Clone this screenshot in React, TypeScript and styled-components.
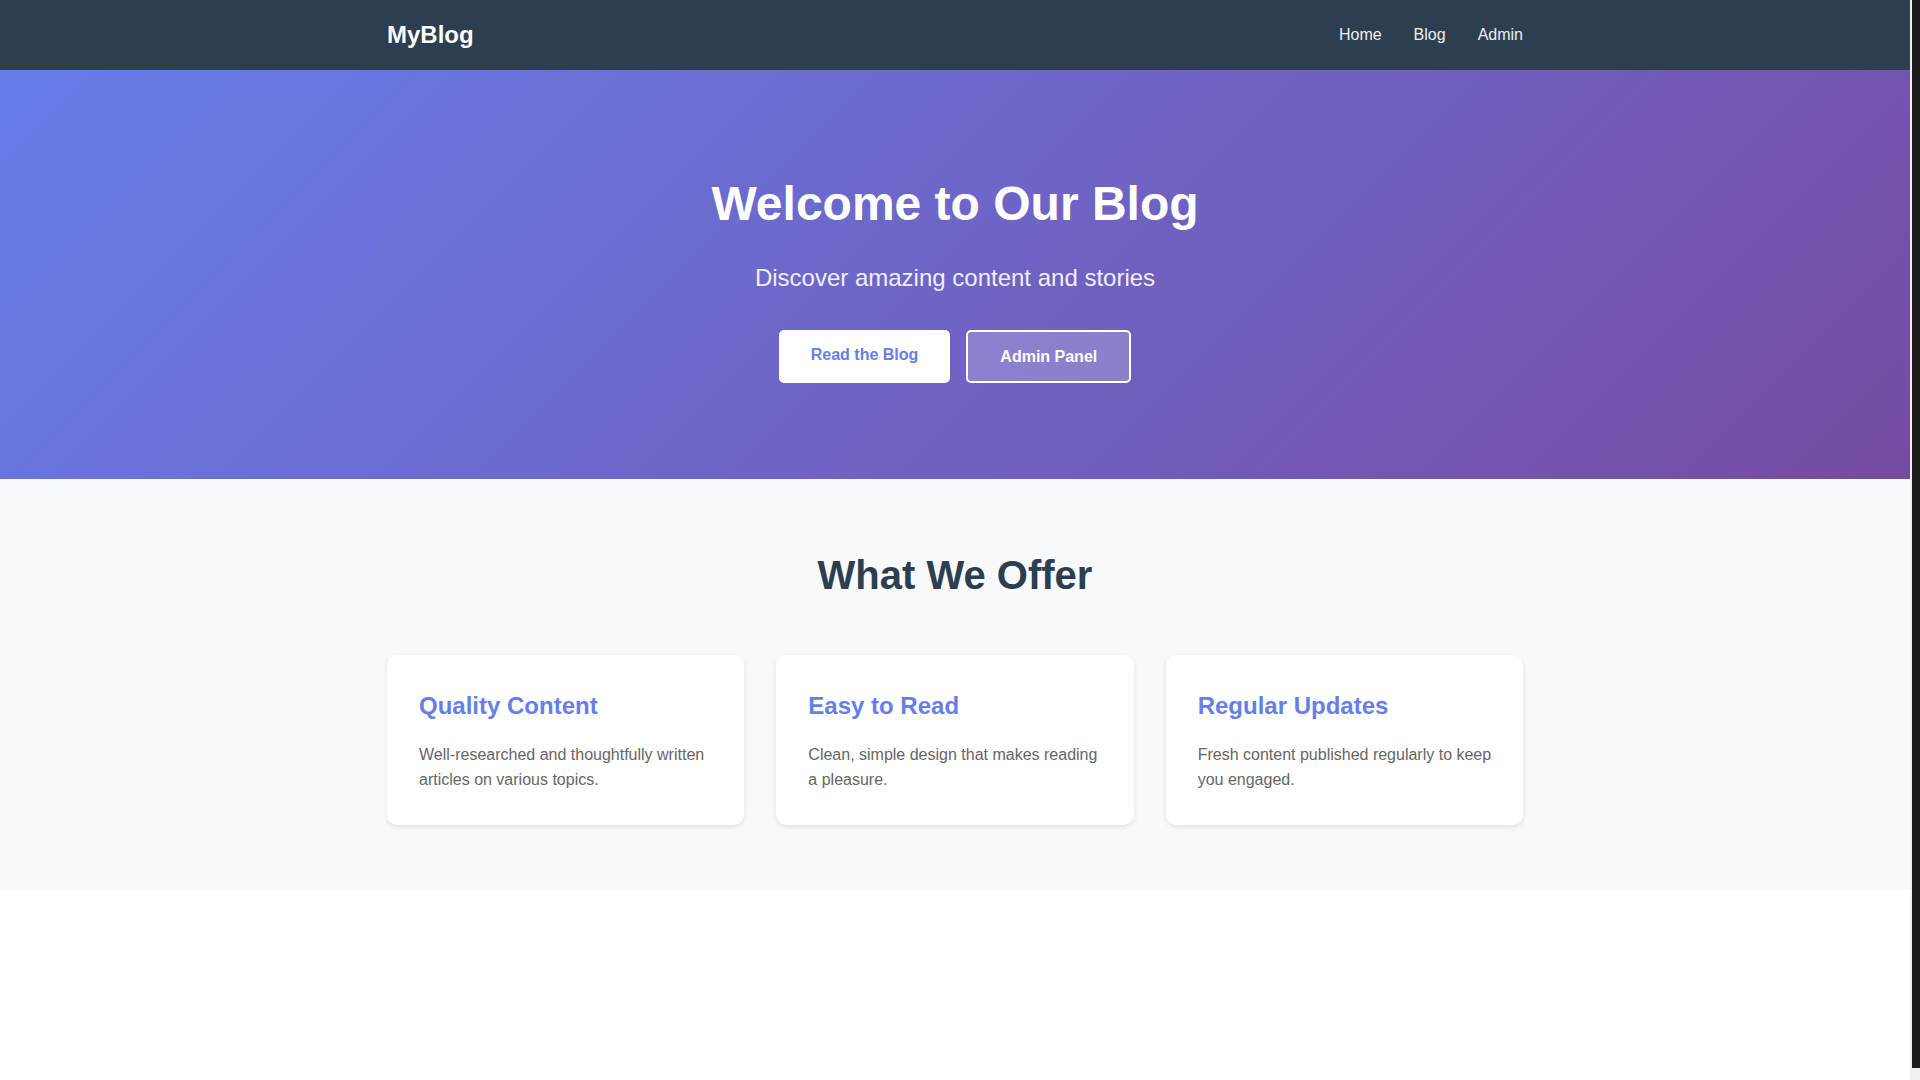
import React from "react";
import styled, { createGlobalStyle } from "styled-components";

const GlobalStyle = createGlobalStyle`
    * {
        box-sizing: border-box;
    }

    html, body {
        margin: 0;
        padding: 0;
    }

    body {
        font-family: "Liberation Sans", Arial, sans-serif;
        line-height: 1.6;
        color: #333;
        background: #fff;
    }
`;

type Feature = {
    title: string;
    text: string;
};

const features: Feature[] = [
    {
        title: "Quality Content",
        text: "Well-researched and thoughtfully written articles on various topics.",
    },
    {
        title: "Easy to Read",
        text: "Clean, simple design that makes reading a pleasure.",
    },
    {
        title: "Regular Updates",
        text: "Fresh content published regularly to keep you engaged.",
    },
];

const App: React.FC = () => {
    return (
        <Shell>
            <GlobalStyle />
            <Page>
                <NavBar>
                    <Container>
                        <NavInner>
                            <Logo href="#">MyBlog</Logo>
                            <NavLinks>
                                <NavLink href="#">Home</NavLink>
                                <NavLink href="#">Blog</NavLink>
                                <NavLink href="#">Admin</NavLink>
                            </NavLinks>
                        </NavInner>
                    </Container>
                </NavBar>

                <Hero>
                    <Container>
                        <HeroTitle>Welcome to Our Blog</HeroTitle>
                        <HeroSubtitle>Discover amazing content and stories</HeroSubtitle>
                        <ButtonRow>
                            <PrimaryButton href="#">Read the Blog</PrimaryButton>
                            <OutlineButton type="button">Admin Panel</OutlineButton>
                        </ButtonRow>
                    </Container>
                </Hero>

                <Features>
                    <Container>
                        <SectionTitle>What We Offer</SectionTitle>
                        <CardGrid>
                            {features.map((f) => (
                                <Card key={f.title}>
                                    <CardTitle>{f.title}</CardTitle>
                                    <CardText>{f.text}</CardText>
                                </Card>
                            ))}
                        </CardGrid>
                    </Container>
                </Features>
            </Page>
            {/* browser scrollbar seen at the right edge of the screenshot */}
            <ScrollTrack>
                <ScrollThumb />
            </ScrollTrack>
        </Shell>
    );
};

export default App;

const Shell = styled.div`
    display: flex;
    height: 100vh;
    overflow: hidden;
`;

const Page = styled.div`
    flex: 1;
    min-width: 0;
    background: #fff;
`;

const ScrollTrack = styled.div`
    width: 10px;
    flex-shrink: 0;
    background: #f0f0f0;
    padding: 0 0 12px 2px;
`;

const ScrollThumb = styled.div`
    height: 100%;
    background: #1c1c1c;
`;

const Container = styled.div`
    max-width: 1200px;
    margin: 0 auto;
    padding: 0 2rem;
`;

const NavBar = styled.nav`
    background: #2c3e50;
    color: #fff;
    padding: 1rem 0;
`;

const NavInner = styled.div`
    display: flex;
    align-items: center;
    justify-content: space-between;
`;

const Logo = styled.a`
    font-size: 1.5rem;
    font-weight: bold;
    color: #fff;
    text-decoration: none;
`;

const NavLinks = styled.div`
    display: flex;
    gap: 2rem;
`;

const NavLink = styled.a`
    color: #ecf0f1;
    text-decoration: none;
    font-size: 1rem;
`;

const Hero = styled.section`
    background: linear-gradient(135deg, #667eea 0%, #764ba2 100%);
    color: #fff;
    padding: 6rem 0;
    text-align: center;
`;

const HeroTitle = styled.h1`
    font-size: 3rem;
    font-weight: bold;
    margin: 0 0 1rem;
`;

const HeroSubtitle = styled.p`
    font-size: 1.5rem;
    margin: 0 0 2rem;
    opacity: 0.9;
`;

const ButtonRow = styled.div`
    display: flex;
    justify-content: center;
    gap: 1rem;
`;

const PrimaryButton = styled.a`
    display: inline-block;
    background: #fff;
    color: #667eea;
    font-weight: bold;
    font-size: 1rem;
    text-decoration: none;
    padding: 12px 2rem 16px;
    border-radius: 5px;
`;

const OutlineButton = styled.button`
    font-family: inherit;
    font-size: 1rem;
    line-height: 1.6;
    font-weight: bold;
    color: #fff;
    background: rgba(255, 255, 255, 0.2);
    border: 2px solid #fff;
    border-radius: 5px;
    padding: 12px 2rem;
    cursor: pointer;
`;

const Features = styled.section`
    background: #f8f9fa;
    padding: 4rem 0;
`;

const SectionTitle = styled.h2`
    font-size: 2.5rem;
    color: #2c3e50;
    text-align: center;
    margin: 0 0 3rem;
`;

const CardGrid = styled.div`
    display: grid;
    grid-template-columns: repeat(3, 1fr);
    gap: 2rem;
`;

const Card = styled.div`
    background: #fff;
    padding: 2rem 1.75rem 2rem 2rem;
    border-radius: 10px;
    box-shadow: 0 2px 5px rgba(0, 0, 0, 0.1);
`;

const CardTitle = styled.h3`
    font-size: 1.5rem;
    color: #667eea;
    margin: 0 0 1rem;
`;

const CardText = styled.p`
    color: #666;
    font-size: 1rem;
    margin: 0;
`;
